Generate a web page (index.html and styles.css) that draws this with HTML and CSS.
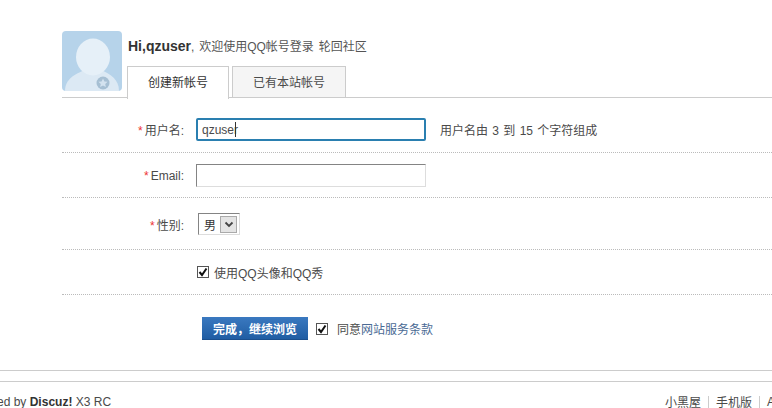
FILE: index.html
```html
<!DOCTYPE html>
<html lang="zh-CN">
<head>
    <meta charset="UTF-8">
    <title>QQ帐号登录</title>
    <link rel="stylesheet" href="styles.css">
</head>
<body>
    <div class="main">
        <div class="head">
            <svg class="avatar" width="60" height="60" viewBox="0 0 60 60">
                <rect width="60" height="60" rx="4" fill="#b6d3ea"/>
                <path d="M3 60c0-12 10-17 20-21h16c9 4 18 9 18 21z" fill="#dce9f4"/>
                <ellipse cx="31" cy="26" rx="17" ry="18.500" fill="#e6f0f8"/>
                <circle cx="41" cy="52" r="6.500" fill="#a6bfd3"/>
                <path d="M41 47.500l1.400 2.900 3.200.400-2.400 2.100.700 3.100-2.900-1.600-2.900 1.600.700-3.100-2.400-2.100 3.200-.400z" fill="#d3e2ef"/>
            </svg>
            <div class="head-right">
                <p class="hello"><strong>Hi,qzuser</strong>, 欢迎使用QQ帐号登录 轮回社区</p>
                <ul class="tabs">
                    <li class="tab current">创建新帐号</li>
                    <li class="tab">已有本站帐号</li>
                </ul>
            </div>
        </div>

        <form class="reg">
            <div class="row row-name">
                <label class="lbl"><em>*</em>用户名:</label>
                <div class="field">
                    <input class="px focus" type="text" value="qzuser">
                    <span class="caret"></span>
                </div>
                <span class="tip">用户名由 3 到 15 个字符组成</span>
            </div>
            <div class="row row-mail">
                <label class="lbl"><em>*</em>Email:</label>
                <input class="px" type="text">
            </div>
            <div class="row row-sex">
                <label class="lbl"><em>*</em>性别:</label>
                <div class="sel">
                    <span>男</span>
                    <span class="arrow">
                        <svg width="10" height="7" viewBox="0 0 10 7"><path d="M1.500 1.500L5 5l3.500-3.500" fill="none" stroke="#444" stroke-width="1.800"/></svg>
                    </span>
                </div>
            </div>
            <div class="row row-qq">
                <label class="check">
                    <span class="box"><svg width="10" height="10" viewBox="0 0 10 10"><path d="M1.500 5l2.500 3L8.500 1.500" fill="none" stroke="#111" stroke-width="2"/></svg></span>
                    使用QQ头像和QQ秀
                </label>
            </div>
            <div class="submit">
                <button class="btn" type="button">完成，继续浏览</button>
                <label class="check agree">
                    <span class="box"><svg width="10" height="10" viewBox="0 0 10 10"><path d="M1.500 5l2.500 3L8.500 1.500" fill="none" stroke="#111" stroke-width="2"/></svg></span>
                    <span>同意<a href="#">网站服务条款</a></span>
                </label>
            </div>
        </form>
    </div>

    <div class="foot">
        <p class="power">Powered by <strong>Discuz!</strong> X3 RC</p>
        <p class="links"><a href="#">小黑屋</a><i></i><a href="#">手机版</a><i></i><a href="#">Archiver</a></p>
    </div>
</body>
</html>
```

FILE: styles.css
```css
html, body {
    margin: 0;
    height: 408px;
    overflow: hidden;
}

body {
    background: #fff;
    color: #4a4a4a;
    font: 12px "Liberation Sans", "Noto Sans CJK SC", sans-serif;
}

p, ul {
    margin: 0;
    padding: 0;
}

a {
    color: #4a4a4a;
    text-decoration: none;
}

.main {
    padding: 31px 0 0 62px;
    border-bottom: 1px solid #ccc;
    height: 339px;
}

.head {
    display: flex;
    gap: 5px;
    border-bottom: 1px solid #ccc;
    height: 66px;
}

.avatar {
    display: block;
}

.hello {
    height: 35px;
    padding-left: 1px;
    line-height: 31px;
    color: #555;
    word-spacing: 1.500px;
}

.hello strong {
    font-size: 14px;
    color: #333;
}

.tabs {
    display: flex;
    gap: 3px;
    list-style: none;
}

.tab {
    width: 112px;
    height: 30px;
    line-height: 33px;
    text-align: center;
    background: #f5f5f5;
    border: 1px solid #ccc;
    border-bottom: 0;
}

.tab.current {
    width: 100px;
    height: 32px;
    background: #fff;
    color: #333;
}

.row {
    display: flex;
    align-items: center;
    border-bottom: 1px dotted #bbb;
    box-sizing: border-box;
}

.row-name { height: 55px; padding-top: 9px; }
.row-mail { height: 45px; padding-top: 1px; }
.row-sex { height: 52px; padding-top: 1px; }
.row-qq { height: 45px; padding-left: 135px; }

.lbl {
    width: 122px;
    margin-right: 12px;
    text-align: right;
    white-space: nowrap;
}

.lbl em {
    margin-right: 2px;
    color: #e33;
    font-style: normal;
}

.field {
    position: relative;
    display: flex;
}

.caret {
    position: absolute;
    left: 39px;
    top: 4px;
    width: 1px;
    height: 15px;
    background: #333;
}

.px {
    width: 230px;
    height: 23px;
    box-sizing: border-box;
    padding: 0 4px;
    border: 1px solid #ddd;
    border-top-color: #848484;
    border-left-color: #848484;
    border-radius: 0;
    font: 12px "Liberation Sans", "Noto Sans CJK SC", sans-serif;
    color: #4a4a4a;
    outline: none;
}

.px.focus {
    border: 2px solid #2a7fb0;
    border-radius: 2px;
    padding: 0 4px;
}

.tip {
    margin-left: 14px;
    word-spacing: 1px;
}

.sel {
    display: flex;
    align-items: center;
    gap: 4px;
    width: 42px;
    height: 22px;
    margin-left: 2px;
    box-sizing: border-box;
    padding-left: 5px;
    border: 1px solid #ddd;
    border-top-color: #848484;
    border-left-color: #848484;
    color: #333;
}

.arrow {
    display: flex;
    align-items: center;
    justify-content: center;
    width: 15px;
    height: 15px;
    background: #e4e4e4;
    border: 1px solid #aaa;
}

.check {
    display: flex;
    align-items: center;
    gap: 5px;
}

.box {
    display: flex;
    align-items: center;
    justify-content: center;
    width: 10px;
    height: 10px;
    border: 1px solid #555;
    background: #fff;
}

.submit {
    display: flex;
    align-items: center;
    padding: 22px 0 0 140px;
}

.btn {
    width: 106px;
    height: 23px;
    padding: 0;
    margin-right: 8px;
    border: 0;
    background: linear-gradient(#3a79c0, #205da3);
    border-bottom: 1px solid #1b4f8d;
    color: #fff;
    font: bold 12px "Liberation Sans", "Noto Sans CJK SC", sans-serif;
}

.agree {
    gap: 9px;
}

.agree a {
    color: #4a6a94;
}

.foot {
    display: flex;
    justify-content: space-between;
    margin: 10px -40px 0 -37px;
    padding-top: 13px;
    border-top: 1px solid #ccc;
}

.power strong {
    color: #333;
}

.links {
    display: flex;
    align-items: center;
    width: 147px;
    margin-top: -2px;
    white-space: nowrap;
}

.links i {
    width: 1px;
    height: 12px;
    margin: 0 7px;
    background: #ccc;
}
```
